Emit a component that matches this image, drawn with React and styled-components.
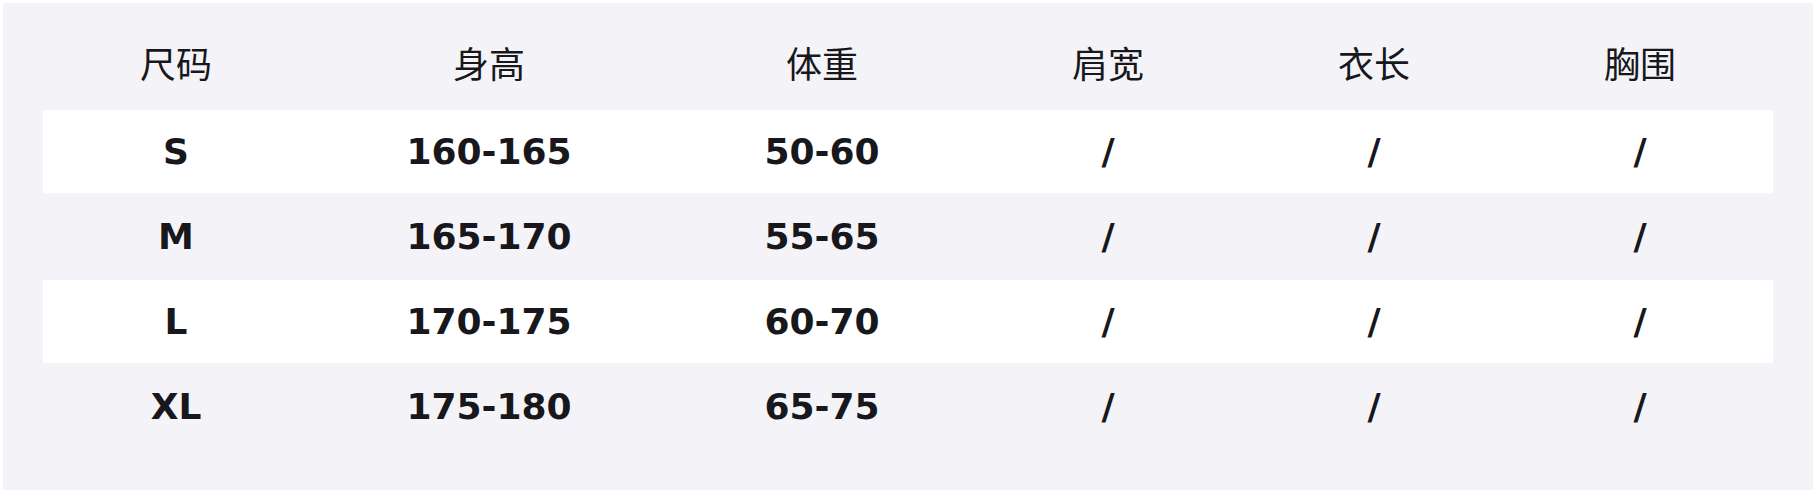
import React from 'react'
import styled, { createGlobalStyle } from 'styled-components';

const Global = createGlobalStyle`
    body {
        margin: 0;
        background: #ffffff;
    }
`

const Page = styled.div`
    padding: 3px;
`

const Panel = styled.div`
    background: #f4f4f8;
    padding: 22px 40px 42px;
    font-family: "DejaVu Sans", "Noto Sans CJK SC", sans-serif;
    color: #17171c;
`

const Table = styled.div`
    display: flex;
    flex-direction: column;
    gap: 2px;
`

const Row = styled.div`
    display: grid;
    grid-template-columns: 266fr 360fr 306fr 266fr 266fr 266fr;
    height: 83px;
    align-items: center;
    background: ${p => (p.$striped ? '#ffffff' : 'transparent')};
`

const Head = styled.div`
    text-align: center;
    font-size: 36px;
    font-weight: 400;
    padding-bottom: 9px;
`

const Cell = styled.div`
    text-align: center;
    font-size: 36px;
    font-weight: 700;
`

const headers = ['尺码', '身高', '体重', '肩宽', '衣长', '胸围'];

const sizes = [
    ['S', '160-165', '50-60', '/', '/', '/'],
    ['M', '165-170', '55-65', '/', '/', '/'],
    ['L', '170-175', '60-70', '/', '/', '/'],
    ['XL', '175-180', '65-75', '/', '/', '/'],
];

const App = () => {
  return (
    <Page>
        <Global />
        <Panel>
            <Table>
                <Row>
                    {headers.map(h => <Head key={h}>{h}</Head>)}
                </Row>
                {sizes.map((row, i) => (
                    <Row key={row[0]} $striped={i % 2 === 0}>
                        {row.map((v, j) => <Cell key={j}>{v}</Cell>)}
                    </Row>
                ))}
            </Table>
        </Panel>
    </Page>
  )
}
export default App;
